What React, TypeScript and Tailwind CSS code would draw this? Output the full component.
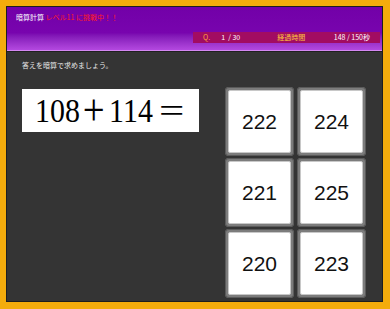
const answers = [222, 224, 221, 225, 220, 223];

function AnswerButton({ value }: { value: number }) {
  return (
    <button className="w-[69px] h-[69px] rounded-[4px] bg-[#7c7c7c] p-[3px] shadow-[inset_0_0_0_1px_#5a5a5a]">
      <div className="w-full h-full rounded-[2px] bg-white border border-[#c8c8c8] flex items-center justify-center text-[21px] text-[#111] font-['Liberation_Sans',Arial,sans-serif]">
        {value}
      </div>
    </button>
  );
}

export default function App() {
  return (
    <div className="w-[390px] h-[309px] bg-[#f4ac0c] pt-[6px] pl-[6px] pr-[7px] pb-[7px] font-['Noto_Sans_CJK_JP',sans-serif]">
      <div className="h-full border border-[#1e1e1e] bg-[#343434] flex flex-col">
        <header className="h-[44px] bg-linear-to-b from-[#7200a8] via-[#7804ae] via-60% to-[#b448e0] border-b border-[#d488f2] flex flex-col">
          <div className="pl-[9px] pt-[5px] text-[7px] leading-[10px]">
            <span className="text-white">暗算計算 </span>
            <span className="text-[#ff1e1e]">レベル11 に挑戦中！！</span>
          </div>
          <div className="mt-auto mb-[7px] ml-auto mr-[2px] w-[187px] h-[11px] bg-[#a20c62] flex items-center text-[7px] leading-none">
            <span className="ml-[10px] text-[#ff9c3c]">Q.</span>
            <span className="ml-[11px] text-white">1 &nbsp;/ 30</span>
            <span className="ml-[37px] text-[#ffc83a]">経過時間</span>
            <span className="ml-auto mr-[10px] text-white">148 / 150秒</span>
          </div>
        </header>
        <div className="flex-1 border-t border-[#202020] px-[15px]">
          <p className="mt-[8px] text-[7px] leading-[10px] text-[#e8e8e8]">
            答えを暗算で求めましょう。
          </p>
          <div className="mt-[17px] flex justify-between">
            <div className="mt-[2px] w-[177px] h-[43px] bg-white flex items-center pl-[13px]">
              <div className="flex items-center text-[34px] leading-none text-black font-['Liberation_Serif','Times_New_Roman',serif] scale-x-[0.88] origin-left">
                <span>108</span>
                <span className="ml-[6px] inline-block scale-[1.3] font-light">+</span>
                <span className="ml-[8px]">114</span>
                <span className="ml-[7px] inline-block scale-x-[1.5] origin-left">=</span>
              </div>
            </div>
            <div className="grid grid-cols-[69px_69px] gap-x-[3px] gap-y-[2px] mr-[1px]">
              {answers.map((a) => (
                <AnswerButton key={a} value={a} />
              ))}
            </div>
          </div>
        </div>
      </div>
    </div>
  );
}
